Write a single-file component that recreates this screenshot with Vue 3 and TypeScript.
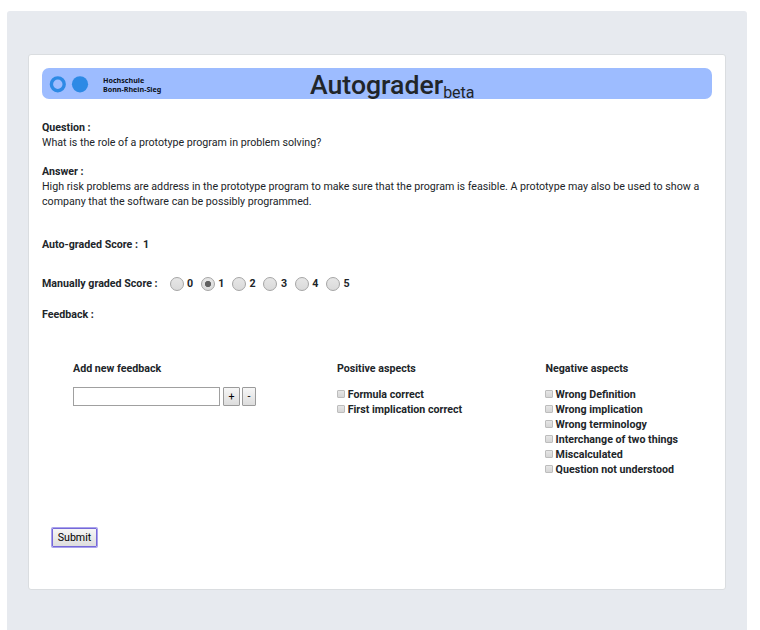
<script setup lang="ts">
import { ref } from 'vue'

const scores: number[] = [0, 1, 2, 3, 4, 5]
const selected = ref<number>(1)
const feedback = ref<string>('')
const positive: string[] = ['Formula correct', 'First implication correct']
const negative: string[] = [
  'Wrong Definition',
  'Wrong implication',
  'Wrong terminology',
  'Interchange of two things',
  'Miscalculated',
  'Question not understood',
]
</script>

<template>
  <main class="page">
    <section class="card">
      <header class="banner">
        <div class="brand">
          <svg class="logo" width="40" height="18" viewBox="0 0 40 18">
            <circle cx="8.8" cy="9.3" r="6.4" fill="none" stroke="#2d8ae5" stroke-width="3.4" />
            <circle cx="31" cy="9.3" r="8.1" fill="#2d8ae5" />
          </svg>
          <div class="school">Hochschule<br />Bonn-Rhein-Sieg</div>
        </div>
        <h1 class="title">Autograder<span class="beta">beta</span></h1>
      </header>

      <div class="question">
        <b>Question :</b>
        <p>What is the role of a prototype program in problem solving?</p>
      </div>
      <div class="answer">
        <b>Answer :</b>
        <p>High risk problems are address in the prototype program to make sure that the program is feasible. A prototype may also be used to show a company that the software can be possibly programmed.</p>
      </div>
      <div class="auto"><b>Auto-graded Score :</b><b class="auto-value">1</b></div>
      <div class="manual">
        <b class="manual-label">Manually graded Score :</b>
        <label v-for="s in scores" :key="s" class="score">
          <input v-model="selected" class="radio" type="radio" name="score" :value="s" />
          <span>{{ s }}</span>
        </label>
      </div>
      <div class="feedback-label"><b>Feedback :</b></div>

      <div class="columns">
        <div>
          <b>Add new feedback</b>
          <div class="adder">
            <input v-model="feedback" class="text" type="text" />
            <button class="btn plus" type="button">+</button>
            <button class="btn minus" type="button">-</button>
          </div>
        </div>
        <div>
          <b>Positive aspects</b>
          <div class="list">
            <label v-for="p in positive" :key="p" class="item"><input class="check" type="checkbox" />{{ p }}</label>
          </div>
        </div>
        <div>
          <b>Negative aspects</b>
          <div class="list negative">
            <label v-for="n in negative" :key="n" class="item"><input class="check" type="checkbox" />{{ n }}</label>
          </div>
        </div>
      </div>
      <button class="btn submit" type="button">Submit</button>
    </section>
  </main>
</template>

<style>
body {
  background: #fff;
  overflow: hidden;
}
</style>

<style scoped>
* {
  box-sizing: border-box;
}
.page {
  width: 740px;
  height: 619px;
  margin: 11px 0 0 7px;
  padding: 43px 21px 0;
  background: #e7eaef;
  border-radius: 3px 3px 0 0;
  font-family: Roboto, 'Liberation Sans', sans-serif;
  font-size: 10.66px;
  line-height: 15px;
  color: #212529;
}
.card {
  display: flex;
  flex-direction: column;
  width: 698px;
  height: 536px;
  padding: 13px;
  background: #fff;
  border: 1px solid #dadde0;
  border-radius: 3px;
}
b {
  display: block;
  font-weight: 700;
}
p {
  margin: 0;
}
.banner {
  display: grid;
  grid-template-columns: 268px 1fr;
  height: 31px;
  background: #9dbcff;
  border-radius: 7px;
}
.brand {
  display: flex;
  padding: 7px 0 0 7px;
}
.logo {
  flex: none;
}
.school {
  padding: 1px 0 0 14px;
  font-family: 'Noto Sans', sans-serif;
  font-size: 7.15px;
  font-weight: 700;
  line-height: 9px;
  color: #0b1020;
  white-space: nowrap;
}
.title {
  margin: 0;
  font-size: 26.65px;
  font-weight: 500;
  line-height: 34px;
  white-space: nowrap;
}
.beta {
  position: relative;
  top: 4px;
  font-size: 16px;
  font-weight: 400;
  line-height: 0;
}
.question {
  margin-top: 21px;
}
.answer {
  margin-top: 14px;
}
.auto {
  display: flex;
  gap: 5px;
  margin-top: 28px;
}
.manual {
  display: flex;
  align-items: center;
  height: 16px;
  margin-top: 23px;
}
.manual-label {
  width: 127.5px;
}
.score {
  display: flex;
  align-items: center;
  width: 31.3px;
  font-weight: 700;
}
.radio {
  appearance: none;
  width: 14px;
  height: 14px;
  margin: 1px 3.5px 0 0;
  border: 1px solid #a5a5a5;
  border-radius: 50%;
  background: linear-gradient(#e6e6e6, #dadada);
}
.radio:checked {
  background: radial-gradient(circle, #606060 0 2.8px, transparent 3.4px), linear-gradient(#e6e6e6, #dadada);
}
.feedback-label {
  margin-top: 16px;
}
.columns {
  display: grid;
  grid-template-columns: 264px 208.5px 1fr;
  height: 156px;
  margin-top: 39px;
  padding-left: 31px;
}
.adder {
  display: flex;
  gap: 3px;
  margin-top: 11px;
}
.text {
  width: 147px;
  height: 19px;
  padding: 1px 3px;
  border: 1px solid #a0a0a0;
  outline: none;
  font: inherit;
}
.btn {
  padding: 0;
  border: 1px solid #9b9b9b;
  border-radius: 1px;
  background: linear-gradient(#f6f6f6, #dddddd);
  font: inherit;
  color: #000;
  text-align: center;
}
.plus {
  width: 17px;
  height: 19px;
}
.minus {
  width: 14px;
  height: 19px;
  margin-left: -1px;
}
.list {
  margin-top: 11px;
}
.negative {
  margin-left: -0.6px;
}
.item {
  display: flex;
  height: 15px;
  font-weight: 700;
  white-space: nowrap;
}
.check {
  appearance: none;
  width: 8px;
  height: 8px;
  margin: 3px 2.7px 0 0;
  border: 1px solid #bdbdbd;
  border-radius: 1px;
  background: linear-gradient(#e6e6e6, #d6d6d6);
}
.submit {
  width: 45px;
  height: 19px;
  margin: 11px 0 0 10px;
  border: 1px solid #7568d8;
  box-shadow: 0 0 0 1px #a9a2ec;
}
</style>
